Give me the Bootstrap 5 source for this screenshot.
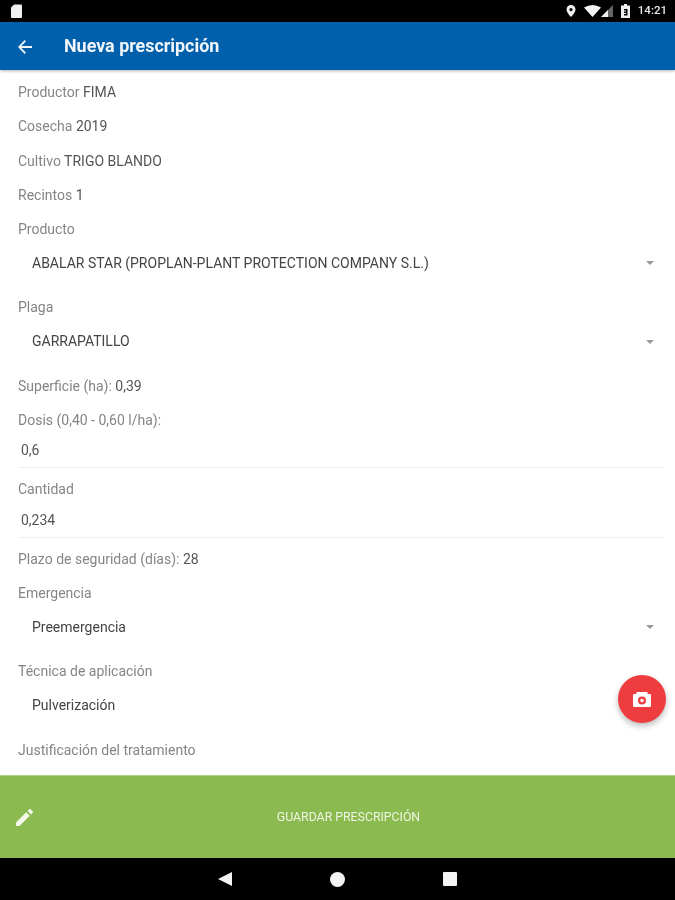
<!DOCTYPE html>
<html lang="es">
<head>
<meta charset="utf-8">
<title>Nueva prescripción</title>
<link href="https://cdn.jsdelivr.net/npm/bootstrap@5.3.0/dist/css/bootstrap.min.css" rel="stylesheet">
<style>
html, body { height: 900px; overflow: hidden; }
body { font-family: Roboto, "Liberation Sans", sans-serif; font-size: 14px; color: #333; background: #fff; }
.app-shell { height: 900px; filter: blur(.35px); }
.status-strip { height: 22px; background: #000; color: #e8e8e8; font-size: 11.5px; font-weight: 500; padding: 0 8px 0 11px; }
.title-strip { height: 48px; background: #0060ac; color: #f2f6fa; box-shadow: 0 1px 3px rgba(0,0,0,.3); padding: 1px 0 0 17px; z-index: 2; }
.title-text { font-size: 17.9px; font-weight: 700; margin-left: 31px; }
.form-area { padding: 5px 10px 0 18px; min-height: 0; overflow: hidden; }
.field-line { height: 34.3px; line-height: 34.3px; color: #858585; white-space: nowrap; }
.field-line b { font-weight: 400; color: #555; }
.picker { height: 44px; padding: 0 11px 10px 14px; color: #444; font-size: 14px; }
.picker-caret { width: 0; height: 0; border-left: 4px solid transparent; border-right: 4px solid transparent; border-top: 4px solid #9a9a9a; }
.entry { height: 35px; padding: 3px 3px 0; line-height: 20px; color: #555; }
.entry-rule { height: 1px; background: #efefef; margin-top: 7px; margin-left: -3px; margin-right: -3px; }
.save-strip { height: 83px; background: #8bbb50; color: #eef5e2; font-size: 12.3px; border-top: 1px solid #b5d490; padding-left: 16px; }
.save-label { flex: 1; text-align: center; margin-left: -18px; padding-left: 7px; }
.nav-strip { height: 42px; background: #000; }
.nav-set { gap: 98px; }
.fab-red { position: absolute; left: 618px; top: 675px; width: 48px; height: 48px; border-radius: 50%; background: #ef3c3f; box-shadow: 0 3px 6px rgba(0,0,0,.28); z-index: 3; }
</style>
</head>
<body>
<div class="app-shell d-flex flex-column position-relative">
  <div class="status-strip d-flex align-items-center justify-content-between flex-shrink-0">
    <svg width="11" height="14" viewBox="0 0 11 14"><path d="M3 .5h7a1 1 0 0 1 1 1V13a1 1 0 0 1-1 1H1a1 1 0 0 1-1-1V3.500z" fill="#f0f0f0"/></svg>
    <div class="d-flex align-items-center">
      <svg width="10" height="12" viewBox="0 0 10 12" class="me-2"><path fill-rule="evenodd" d="M5 0a4.500 4.500 0 0 1 4.500 4.500C9.500 7.800 5 12 5 12S.5 7.800.5 4.500A4.500 4.500 0 0 1 5 0zm0 3a1.600 1.600 0 1 0 0 3.200A1.600 1.600 0 0 0 5 3z" fill="#f0f0f0"/></svg>
      <svg width="17" height="12" viewBox="0 0 17 12"><path d="M0 2.500Q8.500-2.500 17 2.500L8.500 12z" fill="#f4f4f4"/></svg>
      <svg width="12" height="12" viewBox="0 0 12 12" class="me-2"><path d="M12 0v12H0z" fill="#666"/><path d="M7 5v7H0z" fill="#f0f0f0"/></svg>
      <svg width="9" height="14" viewBox="0 0 9 14" class="me-2"><path fill-rule="evenodd" d="M3 0h3v1.500h3V14H0V1.500h3zM3 5v1.500h2V7.500H3V9h2v1H3v1.500h3.500V5z" fill="#f0f0f0"/></svg>
      <span>14:21</span>
    </div>
  </div>
  <div class="title-strip d-flex align-items-center flex-shrink-0">
    <svg width="16" height="16" viewBox="0 0 16 16"><path d="M15 7H4.300l4.600-4.600L7.700 1 1 8l6.700 7 1.200-1.400L4.300 9H15z" fill="#f2f6fa"/></svg>
    <span class="title-text">Nueva prescripción</span>
  </div>
  <div class="form-area flex-grow-1">
    <div class="field-line">Productor <b>FIMA</b></div>
    <div class="field-line">Cosecha <b>2019</b></div>
    <div class="field-line">Cultivo <b>TRIGO BLANDO</b></div>
    <div class="field-line">Recintos <b>1</b></div>
    <div class="field-line">Producto</div>
    <div class="picker d-flex align-items-center justify-content-between"><span>ABALAR STAR (PROPLAN-PLANT PROTECTION COMPANY S.L.)</span><span class="picker-caret"></span></div>
    <div class="field-line">Plaga</div>
    <div class="picker d-flex align-items-center justify-content-between"><span>GARRAPATILLO</span><span class="picker-caret"></span></div>
    <div class="field-line">Superficie (ha): <b>0,39</b></div>
    <div class="field-line">Dosis (0,40 - 0,60 l/ha):</div>
    <div class="entry">0,6<div class="entry-rule"></div></div>
    <div class="field-line">Cantidad</div>
    <div class="entry">0,234<div class="entry-rule"></div></div>
    <div class="field-line">Plazo de seguridad (días): <b>28</b></div>
    <div class="field-line">Emergencia</div>
    <div class="picker d-flex align-items-center justify-content-between"><span>Preemergencia</span><span class="picker-caret"></span></div>
    <div class="field-line">Técnica de aplicación</div>
    <div class="picker d-flex align-items-center justify-content-between"><span>Pulverización</span></div>
    <div class="field-line">Justificación del tratamiento</div>
  </div>
  <div class="save-strip d-flex align-items-center flex-shrink-0">
    <svg width="17" height="17" viewBox="0 0 18 18"><path d="M0 14.300V18h3.700L14.500 7.200l-3.700-3.700zM17.700 4a1 1 0 0 0 0-1.400L15.400.3a1 1 0 0 0-1.400 0l-1.800 1.800 3.700 3.700z" fill="#f4f8ec"/></svg>
    <span class="save-label">GUARDAR PRESCRIPCIÓN</span>
  </div>
  <div class="nav-strip d-flex align-items-center justify-content-center flex-shrink-0">
    <div class="nav-set d-flex align-items-center">
      <svg width="14" height="14" viewBox="0 0 14 14"><path d="M14 0v14L0 7z" fill="#f4f4f4"/></svg>
      <svg width="15" height="15" viewBox="0 0 15 15"><circle cx="7.500" cy="7.500" r="7.500" fill="#f4f4f4"/></svg>
      <svg width="14" height="14" viewBox="0 0 14 14"><rect width="14" height="14" rx="1" fill="#f4f4f4"/></svg>
    </div>
  </div>
  <div class="fab-red d-flex align-items-center justify-content-center">
    <svg width="18" height="15" viewBox="0 0 18 15"><path fill-rule="evenodd" d="M3.500 0h11v2H17a1 1 0 0 1 1 1v11a1 1 0 0 1-1 1H1a1 1 0 0 1-1-1V3a1 1 0 0 1 1-1h2.500zM9 4.500a4 4 0 1 0 0 8 4 4 0 0 0 0-8zm0 2.200a1.800 1.800 0 1 1 0 3.600 1.800 1.800 0 0 1 0-3.600z" fill="#fff"/></svg>
  </div>
</div>
<script src="https://cdn.jsdelivr.net/npm/bootstrap@5.3.0/dist/js/bootstrap.bundle.min.js"></script>
</body>
</html>
